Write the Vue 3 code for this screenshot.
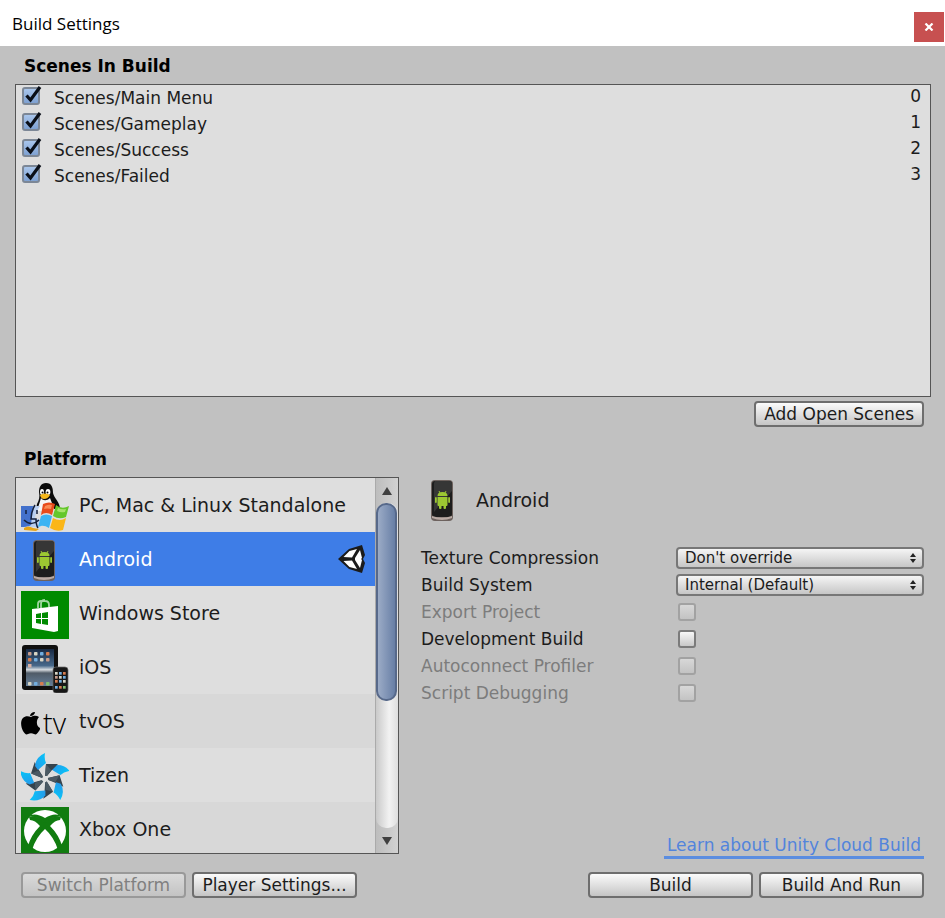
<template>
  <div class="build-window">
    <header class="title-bar">
      <span class="window-title">Build Settings</span>
      <button class="close-button" type="button" aria-label="Close">
        <svg width="10" height="8" viewBox="0 0 10 8">
          <path d="M1.5 .5l7 7M8.5 .5l-7 7" stroke="#fff" stroke-width="2.2" />
        </svg>
      </button>
    </header>

    <main class="window-body">
      <h2 class="section-title">Scenes In Build</h2>
      <ul class="scene-list">
        <li v-for="(scene, index) in scenes" :key="scene.path" class="scene-row">
          <label class="scene-label">
            <span class="check-box">
              <input v-model="scene.enabled" type="checkbox" class="toggle" />
              <svg v-if="scene.enabled" class="tick" width="20" height="20" viewBox="0 0 20 20">
                <path d="M4.5 10.5l4 4.5L18 2" fill="none" stroke="#0a0f18" stroke-width="3.2" />
              </svg>
            </span>
            <span class="scene-path">{{ scene.path }}</span>
          </label>
          <span class="scene-index">{{ index }}</span>
        </li>
      </ul>
      <div class="scene-actions">
        <button class="btn" type="button">Add Open Scenes</button>
      </div>

      <h2 class="section-title platform-title">Platform</h2>
      <div class="columns">
        <section class="platform-box">
          <ul class="platform-list">
            <li v-for="platform in platforms" :key="platform.id">
              <button
                type="button"
                class="platform-row"
                :class="{ selected: platform.id === selected, shaded: platform.shaded }"
                @click="selected = platform.id"
              >
                <!-- Tux, Finder and Windows flag -->
                <svg v-if="platform.id === 'standalone'" class="platform-icon" viewBox="0 0 48 48">
                  <path d="M16 21c2-4 3-7 2-12 0-5 2-9 7-9 6 0 7 5 7 10 1 5 7 9 7 16H15z" fill="#0b0b0b" />
                  <path d="M20 15c2 3 6 3 9 0l5 13H16z" fill="#f5f5f5" />
                  <ellipse cx="21" cy="9" rx="2" ry="3" fill="#fff" />
                  <ellipse cx="27" cy="9" rx="2.4" ry="3" fill="#fff" />
                  <circle cx="21.500" cy="9.500" r="1" />
                  <circle cx="26.500" cy="9.500" r="1" />
                  <path d="M19 12q5-3 10 0-2 4-6 4-3 0-4-4z" fill="#f6b81c" />
                  <path d="M0 23h13v21H0z" fill="#4371cc" />
                  <path d="M12 23h7c-4 6-5 10-5 13h4l2 8H0c8 0 10-2 10-2z" fill="#b9cff0" />
                  <path d="M14 22c-3 5-4 10-4 14h5q0 6 2 9M5 27v4M16 27v4M3 37c5 5 11 4 15 0" fill="none" stroke="#15213c" stroke-width="1.500" />
                  <path d="M3 45q4-3 9 0l6 1-3 2-12-1z" fill="#e7a417" />
                  <path d="M22 21q6-3 12 0l-3 11q-6-4-11 0z" fill="#e84b1b" />
                  <path d="M35 22q6 5 13 1l-3 11q-7 3-13-1z" fill="#64c72b" />
                  <path d="M20 33q5-3 11 0l-3 12q-6-4-11-1z" fill="#3cb3f3" />
                  <path d="M32 35q7 4 13 0l-3 12q-7 2-13-2z" fill="#fbb617" />
                  <path d="M24 23q4-2 7-1l-1 4q-4-1-7 0z" fill="#f98a54" />
                  <path d="M37 25q4 2 8 1l-1 3q-4 1-8-1z" fill="#a7e36b" />
                </svg>

                <svg v-else-if="platform.id === 'android'" class="platform-icon" viewBox="0 0 48 48">
                  <rect x="12" y="3" width="22" height="41" rx="4" fill="#6d625e" />
                  <rect x="13" y="4" width="20" height="36" rx="3" fill="#1d1d1d" />
                  <path d="M16 4h14q3 0 3 3v7L15 35V6z" fill="#363636" />
                  <path d="M13 39q10 3 20 0v2q-10 4-20 0z" fill="#b9aaa4" />
                  <g fill="#9cc832">
                    <path d="M18.500 19q0-4 5-4t5 4zM18.500 20h10v8q0 1-1 1h-8q-1 0-1-1z" />
                    <rect x="16" y="20" width="1.800" height="6" rx=".9" />
                    <rect x="29.200" y="20" width="1.800" height="6" rx=".9" />
                    <rect x="20" y="27" width="2.500" height="5" rx="1" />
                    <rect x="24.500" y="27" width="2.500" height="5" rx="1" />
                    <path d="M20 14l1 2M27 14l-1 2" stroke="#9cc832" />
                  </g>
                </svg>

                <svg v-else-if="platform.id === 'store'" class="platform-icon" viewBox="0 0 48 48">
                  <path d="M0 0h48v48H0z" fill="#008a00" />
                  <path d="M17 17v-4q0-3 3-3h4q4 0 4 4v2M20 17v-4q0-4 4-4" fill="none" stroke="#9fd69f" stroke-width="1.800" />
                  <path d="M11 18l26-3v25l-4 1-22-4z" fill="#fff" />
                  <path d="M15 23l5-1v5h-5zM21 22l6-1v6h-6zM15 28h5v5l-5-1zM21 28h6v6l-6-1z" fill="#008a00" />
                </svg>

                <svg v-else-if="platform.id === 'ios'" class="platform-icon" viewBox="0 0 48 48">
                  <defs>
                    <linearGradient id="tabletScreen" x1="0" y1="0" x2="0" y2="1">
                      <stop offset="0" stop-color="#182943" />
                      <stop offset=".45" stop-color="#47688a" />
                      <stop offset=".56" stop-color="#d7dce0" />
                      <stop offset=".65" stop-color="#4f5b67" />
                      <stop offset="1" stop-color="#657f9a" />
                    </linearGradient>
                  </defs>
                  <rect x="1" y="0" width="36" height="45" rx="3" fill="#101010" />
                  <rect x="5" y="4" width="28" height="37" fill="url(#tabletScreen)" />
                  <g v-for="n in 4" :key="n">
                    <rect :x="1 + n * 6" y="7" width="3.500" height="3.500" rx=".8" :fill="appColors[n - 1]" />
                    <rect :x="1 + n * 6" y="13" width="3.500" height="3.500" rx=".8" :fill="appColors[4 - n]" />
                    <rect :x="1 + n * 6" y="37" width="3.500" height="3.500" rx=".8" :fill="appColors[n]" />
                  </g>
                  <rect x="7" y="19" width="3.500" height="3.500" fill="#d6b0a4" />
                  <rect x="32" y="22" width="15" height="26" rx="3" fill="#171717" stroke="#696969" stroke-width=".7" />
                  <g v-for="n in 3" :key="'p' + n">
                    <rect :x="30 + n * 4" y="27" width="2.700" height="2.700" :fill="appColors[n]" />
                    <rect :x="30 + n * 4" y="31" width="2.700" height="2.700" :fill="appColors[n - 1]" />
                    <rect :x="30 + n * 4" y="35" width="2.700" height="2.700" :fill="appColors[4 - n]" />
                    <rect :x="30 + n * 4" y="41" width="2.700" height="2.700" :fill="appColors[n + 1]" />
                  </g>
                </svg>

                <svg v-else-if="platform.id === 'tvos'" class="platform-icon" viewBox="0 0 48 48">
                  <path d="M18 18c-3-2-6-1-8 0-3-1-6-1-8 1-3 3-2 9 0 13 2 3 3 4 5 3 2-1 4-1 6 0 2 1 3 0 5-3 1-1 1-2 1-3-4-2-4-8-1-11zM14 13c-3 0-5 2-5 4 3 0 5-2 5-4z" />
                  <text x="22" y="35" class="tv-text">tv</text>
                </svg>

                <!-- pinwheel: one blade repeated around the hub -->
                <svg v-else-if="platform.id === 'tizen'" class="platform-icon" viewBox="0 0 48 48">
                  <defs>
                    <linearGradient id="blade" x1="1" y1="0" x2="0" y2="1">
                      <stop offset="0" stop-color="#03c8fa" />
                      <stop offset="1" stop-color="#2b95e8" />
                    </linearGradient>
                  </defs>
                  <g v-for="n in 5" :key="n" :transform="`rotate(${n * 72} 24 26)`">
                    <path d="M24 0q-1 6 1 10l-8 7-3-4q1-9 10-13z" fill="url(#blade)" />
                    <path d="M25 11h12l-6 6-5 6-2 0z" fill="#35434d" />
                    <path d="M25 11l5 6-4 6h-2z" fill="#4b5963" />
                  </g>
                </svg>

                <svg v-else class="platform-icon" viewBox="0 0 48 48">
                  <path d="M0 0h48v48H0z" fill="#117c10" />
                  <circle cx="24" cy="24" r="21" fill="#fff" />
                  <path d="M8 10q6-3 16 5 10-8 16-5l-1 3q-5 0-10 6 9 9 12 20l-4 4q-4-13-13-21-9 8-13 21l-4-4q3-11 12-20-5-6-10-6z" fill="#117c10" />
                  <path d="M10 8q6-2 14 3 8-5 14-3l3 2q-7-2-17 6Q14 8 7 10z" fill="#117c10" />
                </svg>

                <span class="platform-name">{{ platform.name }}</span>

                <svg v-if="platform.id === selected" class="unity-mark" width="28" height="28" viewBox="0 0 28 28">
                  <path d="M0 14L11 4l13-4 3 10-2 4 2 4-3 10-13-4z" fill="#1b1b1b" />
                  <path d="M5.500 12l6-6 7.500-2-5 8.500zM17 13l5-8 2 8-1 1 1 1-2 8-5-8zM5.500 16l8.500-.5L19 24l-7.500-2z" fill="#fff" />
                </svg>
              </button>
            </li>
          </ul>
          <div class="scrollbar">
            <button class="scroll-arrow" type="button" aria-label="Scroll up">
              <svg width="10" height="8" viewBox="0 0 10 8"><path d="M0 8L5 0l5 8z" fill="#404040" /></svg>
            </button>
            <div class="scroll-track">
              <div class="scroll-thumb"></div>
            </div>
            <button class="scroll-arrow" type="button" aria-label="Scroll down">
              <svg width="10" height="8" viewBox="0 0 10 8"><path d="M0 0l5 8 5-8z" fill="#404040" /></svg>
            </button>
          </div>
        </section>

        <section class="details">
          <div class="details-header">
            <svg class="platform-icon" viewBox="2 -1 48 48">
              <rect x="12" y="3" width="22" height="41" rx="4" fill="#6d625e" />
              <rect x="13" y="4" width="20" height="36" rx="3" fill="#1d1d1d" />
              <path d="M16 4h14q3 0 3 3v7L15 35V6z" fill="#363636" />
              <path d="M13 39q10 3 20 0v2q-10 4-20 0z" fill="#b9aaa4" />
              <g fill="#9cc832">
                <path d="M18.500 19q0-4 5-4t5 4zM18.500 20h10v8q0 1-1 1h-8q-1 0-1-1z" />
                <rect x="16" y="20" width="1.800" height="6" rx=".9" />
                <rect x="29.200" y="20" width="1.800" height="6" rx=".9" />
                <rect x="20" y="27" width="2.500" height="5" rx="1" />
                <rect x="24.500" y="27" width="2.500" height="5" rx="1" />
                <path d="M20 14l1 2M27 14l-1 2" stroke="#9cc832" />
              </g>
            </svg>
            <span class="platform-name">Android</span>
          </div>

          <div v-for="option in dropdowns" :key="option.id" class="option-row">
            <label :for="option.id">{{ option.label }}</label>
            <span class="select-box">
              <select :id="option.id" class="dropdown">
                <option>{{ option.value }}</option>
              </select>
              <svg class="select-arrows" width="6" height="10" viewBox="0 0 6 10">
                <path d="M0 4l3-4 3 4zM0 6l3 4 3-4z" fill="#222" />
              </svg>
            </span>
          </div>
          <div
            v-for="option in toggles"
            :key="option.id"
            class="option-row"
            :class="{ disabled: option.disabled }"
          >
            <label :for="option.id">{{ option.label }}</label>
            <input :id="option.id" type="checkbox" class="toggle option-toggle" :disabled="option.disabled" />
          </div>

          <a class="cloud-link" href="#">Learn about Unity Cloud Build</a>
        </section>
      </div>

      <footer class="footer">
        <button class="btn wide" type="button" disabled>Switch Platform</button>
        <button class="btn wide" type="button">Player Settings...</button>
        <span class="spacer"></span>
        <button class="btn wide" type="button">Build</button>
        <button class="btn wide" type="button">Build And Run</button>
      </footer>
    </main>
  </div>
</template>

<script setup>
import { ref } from 'vue'

const scenes = ref([
  { path: 'Scenes/Main Menu', enabled: true },
  { path: 'Scenes/Gameplay', enabled: true },
  { path: 'Scenes/Success', enabled: true },
  { path: 'Scenes/Failed', enabled: true }
])

const selected = ref('android')

const platforms = [
  { id: 'standalone', name: 'PC, Mac & Linux Standalone' },
  { id: 'android', name: 'Android' },
  { id: 'store', name: 'Windows Store' },
  { id: 'ios', name: 'iOS' },
  { id: 'tvos', name: 'tvOS', shaded: true },
  { id: 'tizen', name: 'Tizen' },
  { id: 'xbox', name: 'Xbox One', shaded: true }
]

const dropdowns = [
  { id: 'texture', label: 'Texture Compression', value: "Don't override" },
  { id: 'system', label: 'Build System', value: 'Internal (Default)' }
]

const toggles = [
  { id: 'export', label: 'Export Project', disabled: true },
  { id: 'development', label: 'Development Build', disabled: false },
  { id: 'profiler', label: 'Autoconnect Profiler', disabled: true },
  { id: 'debugging', label: 'Script Debugging', disabled: true }
]

const appColors = ['#c79b8a', '#d8d5c5', '#72aee0', '#d57d50', '#7fbd70']
</script>

<style>
body {
  margin: 0;
}
</style>

<style scoped>
* {
  box-sizing: border-box;
}

.build-window {
  display: flex;
  flex-direction: column;
  min-height: 100vh;
  background: #c1c1c1;
  color: #1c1c1c;
  font-family: "DejaVu Sans", Verdana, sans-serif;
  font-size: 17px;
}

button,
select {
  font-family: inherit;
  color: inherit;
}

.title-bar {
  display: flex;
  align-items: flex-start;
  justify-content: space-between;
  height: 46px;
  padding: 12px 1px 0 12px;
  background: #fff;
}

.window-title {
  color: #000;
  font-family: "Open Sans", "Noto Sans", sans-serif;
  font-size: 17px;
  line-height: 24px;
}

.close-button {
  display: flex;
  align-items: center;
  justify-content: center;
  width: 30px;
  height: 30px;
  padding: 0;
  border: 0;
  background: #c75050;
}

.window-body {
  display: flex;
  flex: 1;
  flex-direction: column;
  padding: 8px 14px 20px 15px;
}

.section-title {
  margin: 0;
  padding-left: 9px;
  color: #000;
  font-size: 17px;
  font-weight: bold;
  line-height: 24px;
}

.scene-list {
  flex: 1;
  min-height: 120px;
  margin: 6px 0 0;
  padding: 0;
  border: 1px solid #555;
  background: #dedede;
  list-style: none;
}

.scene-row {
  display: flex;
  justify-content: space-between;
  height: 26px;
  padding: 0 9px 0 6px;
}

.scene-label {
  display: flex;
  gap: 12px;
}

.check-box {
  display: grid;
  width: 20px;
  height: 20px;
}

.check-box > * {
  grid-area: 1 / 1;
}

.tick {
  pointer-events: none;
}

.toggle {
  appearance: none;
  align-self: end;
  width: 18px;
  height: 18px;
  margin: 0;
  border: 2px solid #7b7b7b;
  border-radius: 3px;
  background: linear-gradient(#f7f7f7, #c8c8c8);
}

.toggle:checked {
  border-color: #7c8796;
  background: linear-gradient(#a9c6ec, #7ea1d2);
}

.toggle:disabled {
  border-color: #a2a2a2;
  background: linear-gradient(#d8d8d8, #c3c3c3);
}

.scene-path {
  line-height: 26px;
}

.scene-index {
  line-height: 22px;
}

.scene-actions {
  display: flex;
  justify-content: flex-end;
  padding: 4px 7px 0 0;
}

.btn {
  height: 26px;
  padding: 0 8px;
  border: 2px solid #6e6e6e;
  border-radius: 4px;
  background: linear-gradient(#fbfbfb, #c5c5c5);
  font-size: 17px;
  line-height: 22px;
  white-space: nowrap;
}

.btn:disabled {
  border-color: #999;
  background: linear-gradient(#dadada, #c3c3c3);
  color: #808080;
}

.wide {
  width: 165px;
  padding: 0;
}

.platform-title {
  margin-top: 20px;
}

.columns {
  display: flex;
  gap: 22px;
  height: 377px;
  margin-top: 6px;
}

.platform-box {
  display: flex;
  flex: 0 0 384px;
  border: 1px solid #555;
  background: #dedede;
}

.platform-list {
  flex: 1;
  margin: 0;
  padding: 0;
  overflow: hidden;
  list-style: none;
}

.platform-row {
  display: flex;
  align-items: center;
  width: 100%;
  height: 54px;
  padding: 0 9px 0 5px;
  border: 0;
  background: #dedede;
  text-align: left;
}

.platform-row.shaded {
  background: #d8d8d8;
}

.platform-row.selected {
  background: #3e7de7;
  color: #fff;
}

.platform-icon {
  flex: none;
  width: 48px;
  height: 48px;
  overflow: hidden;
}

.platform-row .platform-icon {
  align-self: flex-end;
  margin-bottom: 1px;
}

.tv-text {
  font-family: "Open Sans", sans-serif;
  font-size: 29px;
  font-weight: 300;
}

.platform-name {
  flex: 1;
  margin-left: 10px;
  font-size: 19px;
  line-height: 24px;
  white-space: nowrap;
}

.scrollbar {
  display: flex;
  flex-direction: column;
  width: 23px;
  border-left: 1px solid #aaa;
  background: linear-gradient(90deg, #bdbdbd, #d2d2d2);
}

.scroll-arrow {
  display: flex;
  align-items: center;
  justify-content: center;
  height: 25px;
  padding: 0;
  border: 0;
  background: transparent;
}

.scroll-track {
  flex: 1;
  border-radius: 10px;
  background: linear-gradient(90deg, #c9c9c9, #f2f2f2 60%, #dedede);
}

.scroll-thumb {
  height: 61%;
  margin-right: 1px;
  border: 2px solid #57698a;
  border-radius: 10px;
  background: linear-gradient(90deg, #9babc6, #687fa6);
}

.details {
  display: flex;
  flex: 1;
  flex-direction: column;
  padding-right: 7px;
}

.details-header {
  display: flex;
  align-items: center;
  height: 48px;
  margin-bottom: 19px;
  padding-bottom: 2px;
}

.details-header .platform-name {
  margin-left: 7px;
}

.option-row {
  display: flex;
  align-items: center;
  justify-content: space-between;
  height: 27px;
}

.option-row.disabled {
  color: #7c7c7c;
}

.select-box {
  display: grid;
  flex: 0 0 248px;
  align-items: center;
}

.select-box > * {
  grid-area: 1 / 1;
}

.dropdown {
  appearance: none;
  width: 100%;
  height: 22px;
  padding: 0 20px 0 7px;
  border: 2px solid #777;
  border-radius: 4px;
  background: linear-gradient(#f5f5f5, #c6c6c6);
  font-size: 15px;
  line-height: 18px;
}

.select-arrows {
  justify-self: end;
  margin-right: 8px;
  pointer-events: none;
}

.option-toggle {
  align-self: center;
  margin-right: 228px;
}

.cloud-link {
  align-self: flex-end;
  margin-top: auto;
  margin-bottom: -5px;
  padding: 0 3px;
  border-bottom: 3px solid #5b8de0;
  color: #5284dc;
  line-height: 22px;
  text-decoration: none;
}

.footer {
  display: flex;
  gap: 6px;
  margin-top: 18px;
  padding: 0 7px 0 6px;
}

.spacer {
  flex: 1;
  margin-right: -6px;
}
</style>
